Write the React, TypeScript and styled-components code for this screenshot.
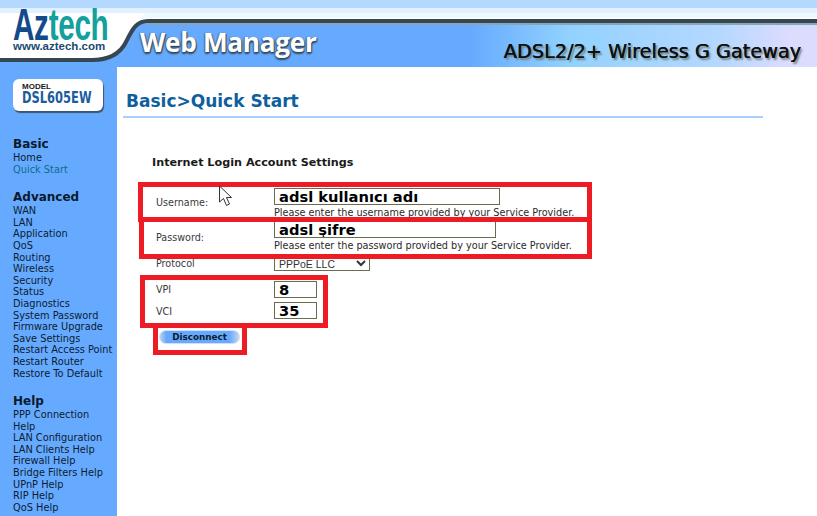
import styled, { createGlobalStyle } from "styled-components";

const GlobalStyle = createGlobalStyle`
  html, body {
    margin: 0;
    padding: 0;
    background: #fff;
    overflow: hidden;
  }
  body {
    font-family: "DejaVu Sans", Verdana, sans-serif;
  }
`;

const Page = styled.div`
  position: relative;
  width: 817px;
  height: 516px;
  overflow: hidden;
`;

const Header = styled.header`
  position: relative;
  height: 67px;
  display: flex;
  background: linear-gradient(90deg, #66aaff 0, #66aaff 470px, #92d2ff 570px, #b5d8ff 720px, #dcdcff 790px);
`;

const HeaderArt = styled.svg`
  position: absolute;
  left: 0;
  top: 0;
`;

const Logo = styled.div`
  position: relative;
  width: 140px;
  padding: 8px 0 0 13px;
  box-sizing: border-box;
`;

const LogoWord = styled.div`
  font: bold 45px/33px "Liberation Sans", Arial, sans-serif;
  transform: scaleX(0.66);
  transform-origin: 0 0;
  white-space: nowrap;
  letter-spacing: -0.5px;
  color: #14a09c;
  span {
    color: #134a8c;
  }
`;

const LogoUrl = styled.div`
  font: bold 11.5px/12px "Liberation Sans", Arial, sans-serif;
  color: #1c4a72;
  margin-top: -1px;
  white-space: nowrap;
`;

const AppName = styled.div`
  position: relative;
  padding-top: 24px;
  font: bold 26.2px/36px "Open Sans", sans-serif;
  color: #fff;
  letter-spacing: -0.3px;
  text-shadow: 1px 1px 1px #33485a, -1px 0 1px #556a7a, 0 2px 2px #2c4a66;
  white-space: nowrap;
`;

const ProductName = styled.div`
  position: relative;
  margin-left: auto;
  padding: 39px 16px 0 0;
  font: 500 19.3px/26px "DejaVu Sans", sans-serif;
  color: #0c1014;
  text-shadow: 0.4px 0 0 #0c1014, 2px 2px 2px #6c7a70;
  white-space: nowrap;
`;

const Body = styled.div`
  display: grid;
  grid-template-columns: 117px 1fr;
  height: 449px;
`;

const Sidebar = styled.nav`
  background: #66aaff;
  padding: 12px 0 0 13px;
  overflow: hidden;
`;

const ModelBadge = styled.div`
  width: 90px;
  height: 32px;
  box-sizing: border-box;
  padding: 3px 0 0 9px;
  background: #fff;
  border-radius: 6px;
  box-shadow: 1px 2px 1px #3c5470;
  margin-bottom: 26px;
`;

const ModelLabel = styled.div`
  font: bold 8px/9px "Liberation Sans", sans-serif;
  color: #1a1a1a;
`;

const ModelName = styled.div`
  font: bold 15px/15px "DejaVu Sans", sans-serif;
  color: #1b5c9e;
  transform: scaleX(0.765);
  transform-origin: 0 0;
  white-space: nowrap;
`;

const NavSection = styled.section`
  margin-bottom: 15px;
`;

const NavTitle = styled.div`
  font: bold 12px/15px "DejaVu Sans", sans-serif;
  color: #0a1a2c;
`;

const NavItem = styled.div<{ $active?: boolean }>`
  font-size: 9.8px;
  line-height: 11.6px;
  white-space: nowrap;
  color: ${({ $active }) => ($active ? "#0f6a8c" : "#0c1c30")};
`;

const Main = styled.main`
  padding: 24px 54px 0 6px;
`;

const Heading = styled.h1`
  margin: 0 0 0 3px;
  font: bold 17px/20px "DejaVu Sans", sans-serif;
  color: #0f5f9f;
`;

const Rule = styled.div`
  height: 2px;
  margin-top: 5px;
  background: #a8d0ff;
`;

const FormArea = styled.div`
  padding: 38px 0 0 29px;
`;

const FormTitle = styled.h2`
  margin: 0 0 18px;
  font: bold 11.2px/14px "DejaVu Sans", sans-serif;
  color: #1a1a1a;
`;

const Row = styled.div<{ $height: number }>`
  display: grid;
  grid-template-columns: 118px 1fr;
  height: ${({ $height }) => $height}px;
  padding-left: 4px;
  font-size: 9.6px;
  color: #3a3a3a;
`;

const RowLabel = styled.div<{ $top: number }>`
  padding-top: ${({ $top }) => $top}px;
  line-height: 12px;
`;

const Field = styled.input<{ $width: number }>`
  display: block;
  width: ${({ $width }) => $width}px;
  height: 17px;
  box-sizing: border-box;
  border: 1px solid #6b6b4e;
  padding: 0 0 0 4px;
  margin: 0;
  outline: none;
  background: #fff;
  font: bold 14.7px/15px "DejaVu Sans", sans-serif;
  color: #000;
`;

const Hint = styled.div`
  font-size: 9.7px;
  line-height: 12px;
  margin-top: 2px;
  color: #2a2a2a;
  white-space: nowrap;
`;

const Select = styled.select`
  display: block;
  width: 96px;
  height: 15px;
  box-sizing: border-box;
  border: 1px solid #6b6b4e;
  padding: 0;
  margin: -1px 0 0;
  background: #fff;
  font-size: 10.5px;
  color: #333;
`;

const DisconnectButton = styled.button`
  display: block;
  margin: 4px 0 0 7px;
  width: 81px;
  height: 14px;
  padding: 0;
  border: 1px solid #dcdcf0;
  border-radius: 7px;
  background: linear-gradient(90deg, #b8d4ee 0, #66aaff 8%, #66aaff 88%, #c4d8ea 100%);
  font: bold 8.8px/12px "DejaVu Sans", sans-serif;
  color: #0c1a2c;
`;

const Callout = styled.div<{ $x: number; $y: number; $w: number; $h: number; $open?: boolean }>`
  position: absolute;
  left: ${({ $x }) => $x}px;
  top: ${({ $y }) => $y}px;
  width: ${({ $w }) => $w}px;
  height: ${({ $h }) => $h}px;
  box-sizing: border-box;
  border: 5px solid #ed1c24;
  border-top-width: ${({ $open }) => ($open ? 0 : 5)}px;
  pointer-events: none;
`;

const Pointer = styled.svg`
  position: absolute;
  left: 218px;
  top: 185px;
`;

const basicLinks = ["Home", "Quick Start"];
const advancedLinks = [
  "WAN",
  "LAN",
  "Application",
  "QoS",
  "Routing",
  "Wireless",
  "Security",
  "Status",
  "Diagnostics",
  "System Password",
  "Firmware Upgrade",
  "Save Settings",
  "Restart Access Point",
  "Restart Router",
  "Restore To Default",
];
const helpLinks = [
  "PPP Connection",
  "Help",
  "LAN Configuration",
  "LAN Clients Help",
  "Firewall Help",
  "Bridge Filters Help",
  "UPnP Help",
  "RIP Help",
  "QoS Help",
];

export default function App() {
  return (
    <Page>
      <GlobalStyle />
      <Header>
        <HeaderArt width="817" height="67" viewBox="0 0 817 67">
          <rect x="0" y="0" width="817" height="8" fill="#b5d8ff" />
          <path d="M0 8H817V20H146C134 20 130 30 124 42C118 54 108 58 92 58H0Z" fill="#fff" />
          <rect x="0" y="8" width="817" height="5" fill="#e2f0ff" />
          <path d="M146 13H817V18H140Z" fill="#effaff" />
          <path
            d="M0 60H92C108 60 120 54 126 42C132 30 136 21 148 21H817"
            fill="none"
            stroke="#37474f"
            strokeWidth="4"
          />
          <path d="M146 24H817" fill="none" stroke="#8aa4b8" strokeWidth="2" />
        </HeaderArt>
        <Logo>
          <LogoWord>
            <span>Az</span>tech
          </LogoWord>
          <LogoUrl>www.aztech.com</LogoUrl>
        </Logo>
        <AppName>Web Manager</AppName>
        <ProductName>ADSL2/2+ Wireless G Gateway</ProductName>
      </Header>
      <Body>
        <Sidebar>
          <ModelBadge>
            <ModelLabel>MODEL</ModelLabel>
            <ModelName>DSL605EW</ModelName>
          </ModelBadge>
          <NavSection>
            <NavTitle>Basic</NavTitle>
            {basicLinks.map((link) => (
              <NavItem key={link} $active={link === "Quick Start"}>
                {link}
              </NavItem>
            ))}
          </NavSection>
          <NavSection>
            <NavTitle>Advanced</NavTitle>
            {advancedLinks.map((link) => (
              <NavItem key={link}>{link}</NavItem>
            ))}
          </NavSection>
          <NavSection>
            <NavTitle>Help</NavTitle>
            {helpLinks.map((link) => (
              <NavItem key={link}>{link}</NavItem>
            ))}
          </NavSection>
        </Sidebar>
        <Main>
          <Heading>Basic&gt;Quick Start</Heading>
          <Rule />
          <FormArea>
            <FormTitle>Internet Login Account Settings</FormTitle>
            <Row $height={33}>
              <RowLabel $top={9}>Username:</RowLabel>
              <div>
                <Field $width={226} readOnly value="adsl kullanıcı adı" />
                <Hint>Please enter the username provided by your Service Provider.</Hint>
              </div>
            </Row>
            <Row $height={36}>
              <RowLabel $top={11}>Password:</RowLabel>
              <div>
                <Field $width={222} readOnly value="adsl şifre" />
                <Hint>Please enter the password provided by your Service Provider.</Hint>
              </div>
            </Row>
            <Row $height={24}>
              <RowLabel $top={1}>Protocol</RowLabel>
              <div>
                <Select defaultValue="llc">
                  <option value="llc">PPPoE LLC</option>
                </Select>
              </div>
            </Row>
            <Row $height={21}>
              <RowLabel $top={3}>VPI</RowLabel>
              <Field $width={43} readOnly value="8" />
            </Row>
            <Row $height={24}>
              <RowLabel $top={4}>VCI</RowLabel>
              <Field $width={43} readOnly value="35" />
            </Row>
            <DisconnectButton type="button">Disconnect</DisconnectButton>
          </FormArea>
        </Main>
      </Body>
      <Callout $x={138} $y={182} $w={454} $h={40} />
      <Callout $x={139} $y={217} $w={453} $h={42} />
      <Callout $x={140} $y={275} $w={188} $h={53} />
      <Callout $x={153} $y={328} $w={94} $h={27} $open />
      <Pointer width="15" height="22" viewBox="0 0 15 22">
        <path d="M1.5 1V17L5.5 13.5L8.5 20.5L11.5 19L8.5 12.5H13.5Z" fill="#fff" stroke="#333" strokeWidth="1" />
      </Pointer>
    </Page>
  );
}
